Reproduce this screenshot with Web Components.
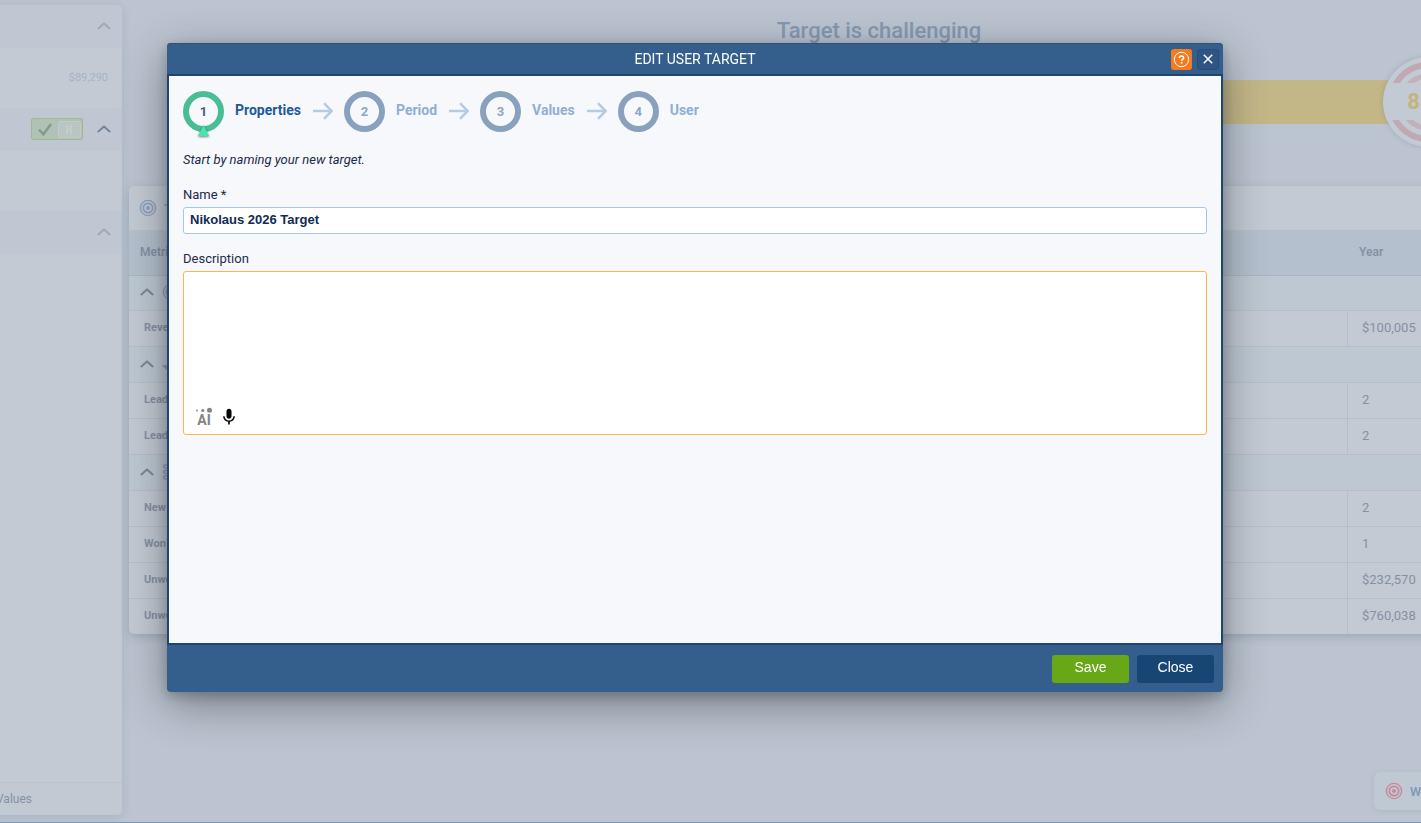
<!DOCTYPE html>
<html lang="en">
<head>
<meta charset="utf-8">
<title>Edit User Target</title>
<style>
  html, body {
    margin: 0;
    height: 100%;
  }

  body {
    overflow: hidden;
    background: #bbc4d0;
    font-family: Roboto, "Liberation Sans", sans-serif;
    font-size: 13px;
    color: #1c2b4a;
  }
</style>
</head>
<body>

<target-page>
  <side-panel slot="side"></side-panel>
  <progress-banner heading="Target is challenging" value="85%"></progress-banner>
  <metric-table></metric-table>
</target-page>
<floating-action label="What's next"></floating-action>

<modal-dialog heading="EDIT USER TARGET">
  <wizard-steps>
    <wizard-step number="1" label="Properties" active></wizard-step>
    <wizard-step number="2" label="Period"></wizard-step>
    <wizard-step number="3" label="Values"></wizard-step>
    <wizard-step number="4" label="User"></wizard-step>
  </wizard-steps>
  <hint-text>Start by naming your new target.</hint-text>
  <text-field label="Name *" value="Nikolaus 2026 Target"></text-field>
  <memo-field label="Description"></memo-field>
  <action-button slot="footer" kind="save">Save</action-button>
  <action-button slot="footer">Close</action-button>
</modal-dialog>

<script>
// attaches an open shadow root with the given markup
class BaseElement extends HTMLElement {
  constructor() {
    super();
    const template = document.createElement('template');
    template.innerHTML = this.constructor.markup;
    this.attachShadow({mode: 'open'});
    this.shadowRoot.appendChild(template.content.cloneNode(true));
  }

  find(selector) {
    return this.shadowRoot.querySelector(selector);
  }
}

class BullseyeIcon extends BaseElement {
  static markup = `
    <style>
      :host { display: block; flex: none; width: 18px; height: 18px; }
      svg { display: block; }
    </style>
    <svg width="100%" height="100%" viewBox="0 0 18 18" fill="none" stroke="currentColor" stroke-width="1.4">
      <circle cx="9" cy="9" r="7.6"/>
      <circle cx="9" cy="9" r="4.7" stroke-width="1.7"/>
      <circle cx="9" cy="9" r="2" fill="currentColor" stroke="none"/>
    </svg>
  `;
}

class ChevronIcon extends BaseElement {
  static markup = `
    <style>
      :host { display: block; flex: none; width: 14px; height: 8px; }
      svg { display: block; }
    </style>
    <svg width="14" height="8" viewBox="0 0 14 8" fill="none" stroke="currentColor" stroke-width="2" stroke-linecap="round" stroke-linejoin="round">
      <path d="M1.4 6.4 7 1.4l5.6 5"/>
    </svg>
  `;
}

class TargetPage extends BaseElement {
  static markup = `
    <style>
      :host {
        display: flex;
        gap: 7px;
        height: 100vh;
        box-sizing: border-box;
        border-bottom: 1px solid #7d97b5;
        overflow: hidden;
      }
      main {
        flex: 1;
        min-width: 0;
        margin-right: -208px;
      }
    </style>
    <slot name="side"></slot>
    <main><slot></slot></main>
  `;
}

class SidePanel extends BaseElement {
  static markup = `
    <style>
      :host {
        display: flex;
        flex-direction: column;
        flex: none;
        box-sizing: border-box;
        width: 322px;
        margin: 5px 0 7px -200px;
        background: #c3cad3;
        border-radius: 5px;
        box-shadow: 0 2px 8px rgb(90 120 150 / 20%);
        overflow: hidden;
      }
      .head {
        display: flex;
        align-items: center;
        justify-content: flex-end;
        gap: 14px;
        box-sizing: border-box;
        height: 43px;
        padding: 0 11px 1px 0;
        background: #bfc8d2;
        color: #9caab9;
      }
      .head.open { color: #77879b; }
      .block {
        height: 60px;
        padding-right: 14px;
        line-height: 60px;
        text-align: right;
        font-size: 11px;
        color: #a6b4c7;
      }
      .fill { flex: 1; }
      .foot {
        height: 32px;
        padding-right: 90px;
        border-top: 1px solid #b8c3cd;
        line-height: 32px;
        text-align: right;
        font-size: 12px;
        background: #c1cad2;
        color: #8391a7;
      }
      .toggle {
        display: flex;
        align-items: center;
        justify-content: space-between;
        box-sizing: border-box;
        width: 52px;
        height: 22px;
        padding: 0 1px 0 6px;
        border: 1px solid #9fb998;
        border-radius: 2px;
        background: #b0c2b6;
      }
      .knob {
        box-sizing: border-box;
        width: 23px;
        height: 17px;
        border: 1px solid #c2ccc8;
        border-radius: 2px;
        background: #b8c5c1;
      }
      svg { display: block; }
    </style>
    <div class="head"><chevron-icon></chevron-icon></div>
    <div class="block">$89,290</div>
    <div class="head open">
      <div class="toggle">
        <svg width="14" height="13" viewBox="0 0 14 13" fill="none" stroke="#839a84" stroke-width="2.4"><path d="M1 6.5l4.4 4.8L13 1"/></svg>
        <div class="knob">
          <svg width="21" height="15" viewBox="0 0 21 15" fill="none" stroke="#c5cecb" stroke-width="2"><path d="M7 3q3 4.500 0 9M13 3q-3 4.500 0 9"/></svg>
        </div>
      </div>
      <chevron-icon></chevron-icon>
    </div>
    <div class="block"></div>
    <div class="head"><chevron-icon></chevron-icon></div>
    <div class="fill"></div>
    <div class="foot">Values</div>
  `;
}

class ProgressBanner extends BaseElement {
  static markup = `
    <style>
      :host { display: block; }
      h1 {
        margin: 0;
        height: 80px;
        line-height: 61px;
        text-align: center;
        font-size: 22px;
        font-weight: 500;
        color: #8599b2;
      }
      .bar {
        position: relative;
        height: 44px;
        margin: 0 0 62px 100px;
        background: #c3b787;
      }
      /* badge sits over the bar */
      .badge {
        position: absolute;
        right: 156px;
        top: -23px;
        width: 90px;
        height: 90px;
        border-radius: 50%;
        background: #c3cad3;
        box-shadow: 0 0 5px rgb(90 110 140 / 30%);
      }
      svg { display: block; }
      .value {
        position: absolute;
        left: 4px;
        right: 4px;
        top: 26px;
        line-height: 37px;
        text-align: center;
        font-size: 22px;
        font-weight: 700;
        background: #c2cad3;
        color: #c4b47b;
      }
    </style>
    <h1></h1>
    <div class="bar">
      <div class="badge">
        <svg width="90" height="90" viewBox="0 0 90 90" fill="none" stroke="#c0a9b2" stroke-width="6">
          <circle cx="45" cy="45" r="37"/>
          <circle cx="45" cy="45" r="26" stroke="#c0b1bb" stroke-width="5"/>
        </svg>
        <div class="value"></div>
      </div>
    </div>
  `;

  connectedCallback() {
    this.find('h1').textContent = this.getAttribute('heading');
    this.find('.value').textContent = this.getAttribute('value');
  }
}

const metrics = [
  {icon: '<bullseye-icon></bullseye-icon>'},
  {name: 'Revenue', year: '$100,005'},
  {icon: '<svg width="18" height="18" viewBox="0 0 18 18" fill="none" stroke="currentColor" stroke-width="2"><path d="M2 11h14v3H5z"/></svg>'},
  {name: 'Leads', year: '2'},
  {name: 'Leads', year: '2'},
  {icon: '<svg width="18" height="18" viewBox="0 0 18 18" fill="none" stroke="currentColor" stroke-width="1.4"><rect x="1.500" y="2" width="15" height="3" rx="1.500"/><rect x="1.500" y="7.500" width="15" height="3" rx="1.500"/><rect x="1.500" y="13" width="15" height="3" rx="1.500"/></svg>'},
  {name: 'New', year: '2'},
  {name: 'Won', year: '1'},
  {name: 'Unweighted', year: '$232,570'},
  {name: 'Unweighted', year: '$760,038'},
];

class MetricTable extends BaseElement {
  static markup = `
    <style>
      :host {
        display: block;
        border-radius: 5px;
        background: #c3cad3;
        box-shadow: 0 3px 8px rgb(80 110 140 / 30%);
        overflow: hidden;
      }
      .caption {
        display: flex;
        align-items: center;
        gap: 7px;
        height: 44px;
        padding-left: 10px;
        color: #8ba1bd;
      }
      table {
        width: 100%;
        border-collapse: separate;
        border-spacing: 0;
        table-layout: fixed;
      }
      .year { width: 282px; }
      th, td {
        box-sizing: border-box;
        height: 36px;
        padding: 0 0 2px 15px;
        border-bottom: 1px solid #b3c0cc;
        text-align: left;
        white-space: nowrap;
        font-size: 11px;
        color: #8391a5;
      }
      thead th {
        height: 46px;
        padding: 0 11px 2px;
        border-color: #a8b6c4;
        font-size: 12px;
        font-weight: 600;
        background: #b4c0cd;
      }
      th + th, td { border-left: 1px solid #b3c0cc; }
      td { padding-left: 14px; font-size: 13px; }
      .group th {
        padding: 0 0 2px 11px;
        background: #bdc8d2;
        color: #77879b;
      }
      tr:first-child.group th { height: 35px; }
      tbody tr:last-child > * { height: 35px; border-bottom: 0; }
      .icons { display: flex; align-items: center; gap: 8px; }
      .icons span { color: #8ba1bd; }
      svg { display: block; }
    </style>
    <div class="caption"><bullseye-icon></bullseye-icon><b>Target</b></div>
    <table>
      <colgroup><col><col class="year"></colgroup>
      <thead><tr><th>Metric</th><th>Year</th></tr></thead>
      <tbody></tbody>
    </table>
  `;

  connectedCallback() {
    this.find('tbody').innerHTML = metrics.map(row => row.icon
      ? `<tr class="group"><th colspan="2"><div class="icons"><chevron-icon></chevron-icon><span>${row.icon}</span></div></th></tr>`
      : `<tr><th>${row.name}</th><td>${row.year}</td></tr>`
    ).join('');
  }
}

class FloatingAction extends BaseElement {
  static markup = `
    <style>
      /* floats over the lower right corner */
      :host { position: fixed; right: -80px; bottom: 13px; }
      button {
        display: flex;
        align-items: center;
        gap: 7px;
        width: 127px;
        height: 38px;
        padding: 0 11px;
        border: 0;
        border-radius: 6px;
        white-space: nowrap;
        font: 700 13px Roboto, sans-serif;
        background: #bfc9d3;
        color: #839bb8;
        box-shadow: 0 1px 4px rgb(90 110 140 / 15%);
      }
      bullseye-icon { color: #c98898; }
    </style>
    <button type="button"><bullseye-icon></bullseye-icon><span></span></button>
  `;

  connectedCallback() {
    this.find('span').textContent = this.getAttribute('label');
  }
}

class ModalDialog extends BaseElement {
  static markup = `
    <style>
      /* overlay above the page */
      :host {
        position: fixed;
        inset: 0;
        display: block;
        padding: 43px 198px 0 167px;
      }
      section {
        display: flex;
        flex-direction: column;
        border-radius: 4px;
        background: #345f8c;
        box-shadow: 0 12px 44px rgb(30 35 45 / 45%), 0 4px 12px rgb(30 35 45 / 25%);
      }
      header {
        display: grid;
        grid-template-columns: 1fr auto 1fr;
        align-items: center;
        box-sizing: border-box;
        height: 33px;
        padding: 0 4px;
        border-top: 1px solid #2a5180;
        border-bottom: 2px solid #1f4672;
        border-radius: 4px 4px 0 0;
      }
      h2 {
        grid-column: 2;
        margin: 0;
        font-size: 14px;
        font-weight: 400;
        color: #fff;
      }
      .tools {
        display: flex;
        justify-content: flex-end;
        gap: 5px;
      }
      .tools button {
        display: flex;
        align-items: center;
        justify-content: center;
        box-sizing: border-box;
        width: 21px;
        height: 21px;
        padding: 0;
        border: 0;
        border-radius: 3px;
        background: #f47b20;
        color: #fff;
      }
      .tools .close {
        width: 22px;
        border: 1px solid #274c7a;
        background: #2f5585;
      }
      .body {
        display: flex;
        flex-direction: column;
        box-sizing: border-box;
        min-height: 567px;
        padding: 14px;
        border: solid #1f4672;
        border-width: 0 2px;
        background: #f7f8fc;
      }
      footer {
        display: flex;
        justify-content: flex-end;
        gap: 8px;
        padding: 10px 9px 9px;
        border-top: 2px solid #1f4672;
      }
    </style>
    <section role="dialog" aria-labelledby="heading">
      <header>
        <h2 id="heading"></h2>
        <div class="tools">
          <button type="button" aria-label="Help">
            <svg width="17" height="17" viewBox="0 0 17 17" fill="none" stroke="currentColor">
              <circle cx="8.500" cy="8.500" r="7.200" stroke-width="1"/>
              <path d="M6.400 7.100c0-1.300.9-2.100 2.100-2.100s2.100.8 2.100 1.900c0 1.500-2 1.500-2 3" stroke-width="1.500"/>
              <path d="M7.800 11.100h1.600v1.500H7.800z" fill="currentColor" stroke="none"/>
            </svg>
          </button>
          <button type="button" class="close" aria-label="Close window">
            <svg width="10" height="10" viewBox="0 0 10 10" stroke="currentColor" stroke-width="1.500"><path d="M.8.8l8.400 8.400M9.200.8L.8 9.200"/></svg>
          </button>
        </div>
      </header>
      <div class="body"><slot></slot></div>
      <footer><slot name="footer"></slot></footer>
    </section>
  `;

  connectedCallback() {
    this.find('h2').textContent = this.getAttribute('heading');
  }
}

class WizardSteps extends BaseElement {
  static markup = `
    <style>
      :host { display: flex; gap: 11px; height: 42px; }
    </style>
    <slot></slot>
  `;
}

class WizardStep extends BaseElement {
  static markup = `
    <style>
      :host {
        display: flex;
        align-items: center;
        gap: 11px;
        font-size: 14px;
        font-weight: 700;
        color: #8fafd4;
      }
      .circle {
        position: relative;
        display: flex;
        align-items: center;
        justify-content: center;
        box-sizing: border-box;
        width: 41px;
        height: 41px;
        border: 6px solid #8aa1bd;
        border-radius: 50%;
        font-size: 13px;
        color: #8da6c3;
      }
      .circle svg { display: none; }
      .label { padding-bottom: 2px; }
      .arrow { display: block; color: #b5cbe4; }
      :host([active]) { color: #1f5a9b; }
      :host([active]) .circle { border-color: #49bd94; color: #355f96; }
      /* pointer hanging over the ring's lower edge */
      :host([active]) .circle svg {
        display: block;
        position: absolute;
        left: 8px;
        top: 28px;
        filter: drop-shadow(0 1px 1px rgb(0 0 0 / 50%));
      }
      :host(:last-of-type) .arrow { display: none; }
    </style>
    <div class="circle">
      <span class="number"></span>
      <svg width="13" height="11" viewBox="0 0 13 11"><path d="M6.500 0L12 11H1z" fill="#4ae3b0"/></svg>
    </div>
    <span class="label"></span>
    <svg class="arrow" width="21" height="18" viewBox="0 0 21 18" fill="none" stroke="currentColor" stroke-width="2.500"><path d="M1 9h19M12 1.200L19.700 9 12 16.800"/></svg>
  `;

  connectedCallback() {
    this.find('.number').textContent = this.getAttribute('number');
    this.find('.label').textContent = this.getAttribute('label');
  }
}

class HintText extends BaseElement {
  static markup = `
    <style>
      :host {
        display: block;
        margin: 20px 0 19px;
        line-height: 16px;
        font-size: 13px;
        font-style: italic;
      }
    </style>
    <slot></slot>
  `;
}

class TextField extends BaseElement {
  static markup = `
    <style>
      :host { display: block; margin-bottom: 17px; }
      label { display: block; line-height: 15px; padding-bottom: 5px; }
      input {
        box-sizing: border-box;
        width: 100%;
        height: 27px;
        padding: 0 6px 2px;
        border: 1px solid #a5c8e8;
        border-radius: 3px;
        font: 700 13px "Liberation Sans", Arial, sans-serif;
        background: #fff;
        color: #0f2c52;
      }
    </style>
    <label for="field"></label>
    <input id="field" type="text">
  `;

  connectedCallback() {
    this.find('label').textContent = this.getAttribute('label');
    this.find('input').value = this.getAttribute('value');
  }
}

class MemoField extends BaseElement {
  static markup = `
    <style>
      :host { display: block; }
      label { display: block; line-height: 15px; padding-bottom: 5px; }
      .box {
        border: 1px solid #fdb54f;
        border-radius: 3px;
        background: #fff;
      }
      textarea {
        display: block;
        box-sizing: border-box;
        width: 100%;
        height: 133px;
        padding: 6px;
        border: 0;
        outline: 0;
        resize: none;
        font: 13px "Liberation Sans", Arial, sans-serif;
        background: none;
        color: #0f2c52;
      }
      .tools { display: flex; gap: 5px; padding: 2px 10px 7px; }
      button {
        width: 20px;
        height: 20px;
        padding: 0;
        border: 0;
        background: none;
        color: #000;
      }
      svg { display: block; }
      .ai {
        display: flex;
        flex-direction: column;
        align-items: center;
        font: 700 14px/14px Roboto, sans-serif;
        color: #858585;
      }
    </style>
    <label for="memo"></label>
    <div class="box">
      <textarea id="memo"></textarea>
      <div class="tools">
        <button type="button" class="ai">
          <svg width="18" height="6" viewBox="0 0 18 6" fill="currentColor">
            <circle cx="2" cy="3.500" r=".9"/><circle cx="7.800" cy="3.500" r="1.600"/><circle cx="14.500" cy="3.200" r="2.500"/>
          </svg>
          <span>AI</span>
        </button>
        <button type="button" aria-label="Dictate">
          <svg width="20" height="20" viewBox="0 0 24 24" fill="currentColor"><path d="M12 14c1.660 0 3-1.340 3-3V5c0-1.660-1.340-3-3-3S9 3.340 9 5v6c0 1.660 1.340 3 3 3zm5.300-3c0 3-2.540 5.100-5.300 5.100S6.700 14 6.700 11H5c0 3.410 2.720 6.230 6 6.720V21h2v-3.280c3.280-.48 6-3.300 6-6.720h-1.700z"/></svg>
        </button>
      </div>
    </div>
  `;

  connectedCallback() {
    this.find('label').textContent = this.getAttribute('label');
  }
}

class ActionButton extends BaseElement {
  static markup = `
    <style>
      :host { display: block; }
      button {
        display: block;
        width: 77px;
        height: 28px;
        padding: 0 0 4px;
        border: 0;
        border-radius: 3px;
        font: 14px "Liberation Sans", Arial, sans-serif;
        background: #174675;
        color: #fff;
      }
      :host([kind="save"]) button { background: #68a716; }
    </style>
    <button type="button"><slot></slot></button>
  `;
}

customElements.define('bullseye-icon', BullseyeIcon);
customElements.define('chevron-icon', ChevronIcon);
customElements.define('target-page', TargetPage);
customElements.define('side-panel', SidePanel);
customElements.define('progress-banner', ProgressBanner);
customElements.define('metric-table', MetricTable);
customElements.define('floating-action', FloatingAction);
customElements.define('modal-dialog', ModalDialog);
customElements.define('wizard-steps', WizardSteps);
customElements.define('wizard-step', WizardStep);
customElements.define('hint-text', HintText);
customElements.define('text-field', TextField);
customElements.define('memo-field', MemoField);
customElements.define('action-button', ActionButton);
</script>
</body>
</html>
